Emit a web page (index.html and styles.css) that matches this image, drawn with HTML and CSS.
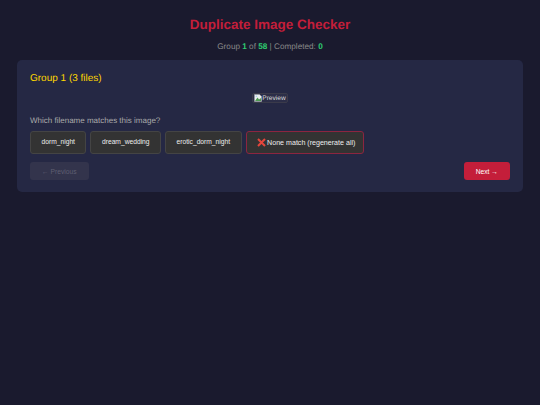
FILE: index.html
```html
<!DOCTYPE html>
<html lang="en">
  <head>
    <meta charset="UTF-8" />
    <title>Duplicate Image Checker</title>
    <link rel="stylesheet" href="styles.css">
  </head>
  <body>
    <h1 class="title">Duplicate Image Checker</h1>
    <p class="stats">Group <strong>1</strong> of <strong>58</strong> | Completed: <strong>0</strong></p>

    <div class="card">
      <h2 class="group-name">Group 1 (3 files)</h2>

      <div class="preview">
        <span class="preview-frame">
          <svg class="broken-icon" viewBox="0 0 8 8" width="8" height="8" aria-hidden="true">
            <path d="M0.5 0.5H5.5L7.5 2.5V7.5H0.5Z" fill="#e8eef0" stroke="#9aa0a6" stroke-width="0.6" />
            <path d="M1 7L3.5 3.5L5 5.5L7 4V7Z" fill="#4f9a52" />
            <circle cx="2.4" cy="2.2" r="0.8" fill="#a9c8ee" />
          </svg>Preview
        </span>
      </div>

      <p class="question">Which filename matches this image?</p>

      <div class="options">
        <button class="option">dorm_night</button>
        <button class="option">dream_wedding</button>
        <button class="option">erotic_dorm_night</button>
        <button class="option option-none">
          <svg class="cross" viewBox="0 0 9 9" width="9" height="9" aria-hidden="true">
            <path d="M1 1L8 8M8 1L1 8" stroke="#e5463c" stroke-width="2" />
          </svg>
          None match (regenerate all)
        </button>
      </div>

      <div class="nav">
        <button class="nav-btn prev">← Previous</button>
        <button class="nav-btn next">Next →</button>
      </div>
    </div>
  </body>
</html>
```

FILE: styles.css
```css
* {
  box-sizing: border-box;
}
body {
  margin: 0;
  padding: 17px 17px 0;
  min-height: 405px;
  background-color: #1a1a2e;
  color: #eeeeee;
  font-family: 'Liberation Sans', arial, sans-serif;
  text-rendering: geometricPrecision;
}
.title {
  margin: 0 0 9px;
  font-size: 13.5px;
  line-height: 16px;
  font-weight: 700;
  text-align: center;
  color: #c41e3a;
}
.stats {
  margin: 0 0 8px;
  font-size: 8.2px;
  line-height: 10px;
  text-align: center;
  color: #888888;
}
.stats strong {
  color: #2ecc71;
}
.card {
  padding: 13px 13px 12px;
  height: 132px;
  background-color: #252844;
  border-radius: 5px;
}
.group-name {
  margin: 0 0 8px;
  font-size: 10px;
  line-height: 12px;
  font-weight: 400;
  color: #ffd700;
}
.preview {
  display: flex;
  justify-content: center;
  margin-bottom: 13px;
}
.preview-frame {
  display: flex;
  align-items: center;
  height: 10px;
  padding: 0 1px;
  font-size: 6.6px;
  color: #dddddd;
  border: 1px solid #3a3a4a;
  border-radius: 2px;
  background-color: #2c2e48;
}
.question {
  margin: 0 0 5px;
  font-size: 8px;
  line-height: 10px;
  color: #aaaaaa;
}
.options {
  display: flex;
  gap: 4px;
  margin-bottom: 8px;
}
.option {
  display: flex;
  align-items: center;
  gap: 1px;
  height: 23px;
  padding: 0 10.5px 2px;
  font-family: inherit;
  font-size: 6.7px;
  color: #eeeeee;
  background-color: #333333;
  border: 1px solid #444444;
  border-radius: 3px;
}
.option-none {
  padding: 0 8px 0 10.5px;
  font-size: 7.1px;
  border-color: #8c2540;
}
.nav {
  display: flex;
  justify-content: space-between;
}
.nav-btn {
  height: 18px;
  padding: 0 12px;
  font-family: inherit;
  font-size: 6.7px;
  border: none;
  border-radius: 3px;
}
.prev {
  color: #5f5f72;
  background-color: #33344c;
}
.next {
  color: #ffffff;
  background-color: #c41e3a;
}
```
